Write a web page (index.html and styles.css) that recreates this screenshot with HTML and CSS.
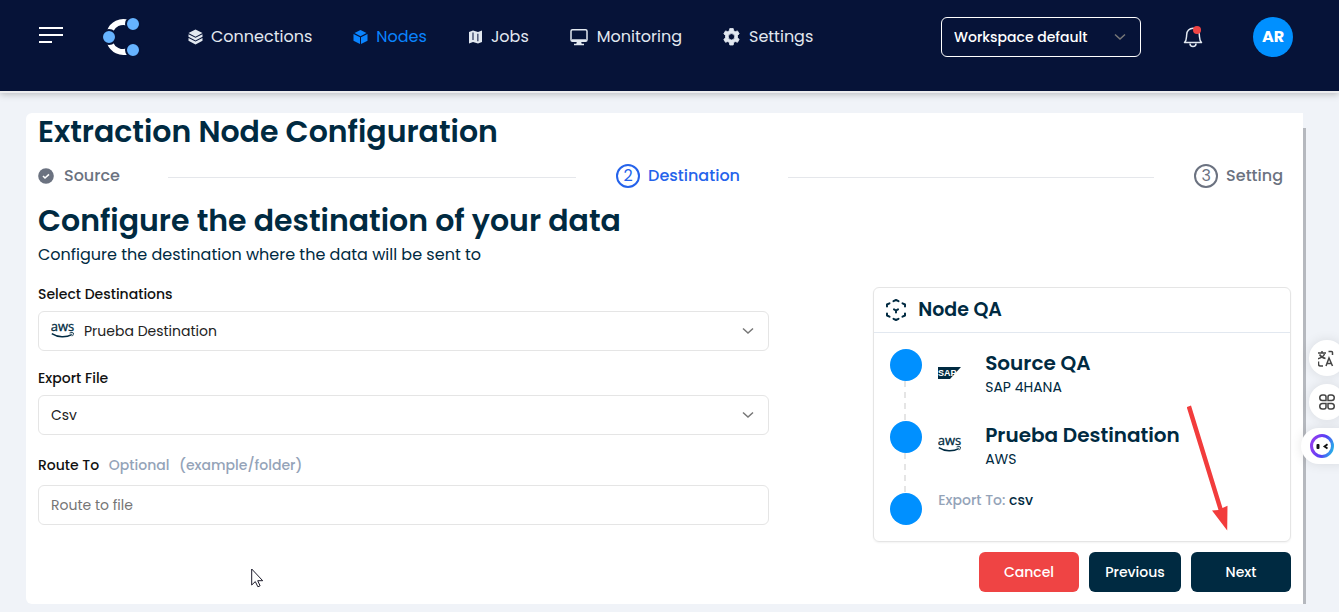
FILE: index.html
```html
<!DOCTYPE html>
<html lang="en">
<head>
<meta charset="utf-8">
<meta name="viewport" content="width=device-width, initial-scale=1">
<title>Extraction Node Configuration</title>
<link rel="stylesheet" href="styles.css">
</head>
<body>
<header class="topbar">
  <button class="menu" type="button" aria-label="Menu">
    <svg width="26" height="20" viewBox="0 0 26 20"><path d="M1 3h24M1 10h24M1 17h13" stroke="#fff" stroke-width="2"/></svg>
  </button>
  <a class="logo" href="#" aria-label="Home">
    <svg width="38" height="40" viewBox="0 0 38 40">
      <path d="M24.500 5.500A14.500 14.500 0 0 0 7 14" fill="none" stroke="#fff" stroke-width="6"/>
      <path d="M24.500 34.500A14.500 14.500 0 0 1 7 26" fill="none" stroke="#fff" stroke-width="6"/>
      <g fill="#66b3ff" stroke="#061338" stroke-width="2"><circle cx="30" cy="7" r="7"/><circle cx="6" cy="20" r="7"/><circle cx="30" cy="33" r="7"/></g>
    </svg>
  </a>
  <nav class="nav">
    <a href="#"><svg width="15" height="16" viewBox="0 0 15 16"><path d="M7.500.5l7 3.600-7 3.600-7-3.600z"/><path d="M.5 5.300v2.500l7 3.600 7-3.600V5.300l-7 3.500z"/><path d="M.5 9v2.800l7 3.700 7-3.700V9l-7 3.500z"/></svg>Connections</a>
    <a href="#" class="current"><svg width="15" height="14" viewBox="0 0 15 14"><path d="M7.500 0l6 3-6 3.200-6-3.200z"/><path d="M.5 4l6.500 3.200V14L.5 10.800zM14.500 4L8 7.200V14l6.500-3.200z"/></svg>Nodes</a>
    <a href="#"><svg width="15" height="14" viewBox="0 0 15 14"><path d="M1 2l4-1.500 5 1.500 4-1.500V12l-4 1.500L5 12l-4 1.500z"/><path d="M5 2.500v7.500M9.800 3.800v7.500" stroke="#565f7e" stroke-width="1.600"/></svg>Jobs</a>
    <a href="#"><svg width="18" height="18" viewBox="0 0 18 18"><rect x="1" y="1.700" width="16" height="11.600" rx="1.500" fill="none" stroke="currentColor" stroke-width="1.500"/><path d="M2 11.200h14v2H2zM7 13h4l.7 2.800H14v1.500H4v-1.500h2.300z"/></svg>Monitoring</a>
    <a href="#"><svg width="17" height="18" viewBox="0 0 17 18"><path fill-rule="evenodd" d="M6.800.5h3.400l.5 2.300 1.500.9 2.300-.8 1.700 2.900-1.700 1.600v2.400l1.700 1.600-1.700 2.900-2.300-.8-1.500.9-.5 2.600H6.800l-.5-2.600-1.500-.9-2.300.8-1.700-2.900 1.700-1.600V7.400L.8 5.800l1.700-2.900 2.300.8 1.500-.9zM8.500 5.600a3.200 3.200 0 1 0 0 6.400 3.200 3.200 0 0 0 0-6.400z" stroke="currentColor" stroke-width=".8" stroke-linejoin="round"/></svg>Settings</a>
  </nav>
  <select class="select workspace" aria-label="Workspace"><option>Workspace default</option></select>
  <button class="bell" type="button" aria-label="Notifications">
    <svg width="20" height="24" viewBox="0 0 20 24"><path d="M1.500 17.500C3.800 15.500 3.300 13 3.700 9.500a6.300 6.300 0 0 1 12.600 0c.4 3.500-.1 6 2.200 8z" fill="none" stroke="#e2e8f0" stroke-width="1.500" stroke-linejoin="round"/><path d="M7 18.500a3 3 0 0 0 6 0" fill="none" stroke="#e2e8f0" stroke-width="1.500"/><circle cx="14" cy="5" r="4" fill="#ef4444"/></svg>
  </button>
  <button class="avatar" type="button">AR</button>
</header>

<main class="page">
  <section class="panel">
    <h1>Extraction Node Configuration</h1>
    <ol class="steps">
      <li><svg width="16" height="16" viewBox="0 0 16 16"><circle cx="8" cy="8" r="7.800" fill="#6b7280"/><path d="M5 8l2 2 4-3.600" fill="none" stroke="#fff" stroke-width="1.600"/></svg><span>Source</span></li>
      <li class="active" aria-current="step"><b>2</b><span>Destination</span></li>
      <li><b>3</b><span>Setting</span></li>
    </ol>
    <h2>Configure the destination of your data</h2>
    <p class="lead">Configure the destination where the data will be sent to</p>
    <div class="columns">
      <form class="form">
        <div class="field">
          <label for="dest">Select Destinations</label>
          <div class="with-logo">
            <svg class="brand" width="24" height="24" viewBox="0 0 24 24"><text x="11.500" y="12.500" text-anchor="middle" class="aws-text">aws</text><path d="M.8 15.600c6 4 14.400 4 20 1" fill="none" stroke="currentColor" stroke-width="1.400"/><path d="M18.600 15c1.800-.5 3.400-.5 3.800 0 .2.800-.3 2.200-1.200 3.200" fill="none" stroke="currentColor"/></svg>
            <select class="select" id="dest"><option>Prueba Destination</option></select>
          </div>
        </div>
        <div class="field">
          <label for="file">Export File</label>
          <select class="select" id="file"><option>Csv</option></select>
        </div>
        <div class="field route">
          <label for="route">Route To <span>Optional</span> <span>(example/folder)</span></label>
          <input id="route" type="text" placeholder="Route to file">
        </div>
      </form>
      <aside class="side">
        <div class="card">
          <h3><svg width="22" height="24" viewBox="0 0 22 24" fill="none" stroke="#002a41" stroke-width="2" stroke-linecap="round" stroke-linejoin="round"><path d="M8.500 3.200L11 2l2.500 1.200M4.500 5.300L2 6.500V8.500M17.500 5.300L20 6.500V8.500M2 15.500v2l2.500 1.200M20 15.500v2l-2.500 1.200M8.500 20.800L11 22l2.500-1.200M9 11.300l2 1.200 2-1.200M11 12.500V14.500"/></svg>Node QA</h3>
          <ol class="timeline">
            <li>
              <svg class="brand" width="24" height="24" viewBox="0 0 24 24"><path d="M0 7h23L12 19H0z" fill="#002a41"/><text x="0" y="16" class="sap-text">SAP</text></svg>
              <div><strong>Source QA</strong><small>SAP 4HANA</small></div>
            </li>
            <li>
              <svg class="brand" width="24" height="24" viewBox="0 0 24 24"><text x="11.500" y="12.500" text-anchor="middle" class="aws-text">aws</text><path d="M.8 15.600c6 4 14.400 4 20 1" fill="none" stroke="currentColor" stroke-width="1.400"/><path d="M18.600 15c1.800-.5 3.400-.5 3.800 0 .2.800-.3 2.200-1.200 3.200" fill="none" stroke="currentColor"/></svg>
              <div><strong>Prueba Destination</strong><small>AWS</small></div>
            </li>
            <li><p><span>Export To:</span> csv</p></li>
          </ol>
          <svg class="arrow" width="42" height="127" viewBox="0 0 42 127" aria-hidden="true"><path d="M-.3 3l4.300-1.500 31.500 102.500 5-2.200-.3 24.700L25 106.500l6.500-.5z" fill="#f23c3c"/></svg>
        </div>
        <div class="actions">
          <button class="btn cancel" type="button">Cancel</button>
          <button class="btn previous" type="button">Previous</button>
          <button class="btn" type="button">Next</button>
        </div>
      </aside>
    </div>
    <svg class="cursor" width="13" height="20" viewBox="0 0 13 20" aria-hidden="true"><path d="M.7 1v16l3.600-3.400 2.600 5.200 2.200-1-2.400-5.100h5z" fill="#fff" stroke="#1c1b2b"/></svg>
  </section>
  <div class="rail"></div>
</main>

<div class="dock">
  <button type="button" aria-label="Translate"><svg width="18" height="17" viewBox="1 0 18 17" fill="none" stroke="#444" stroke-width="1.500"><path d="M1 3h8M5 1v2M2.500 4.500C4 7 6 8 8.500 8.500M7.500 4C6.500 6.500 4 8 1 8.700M11.500 1.500h3a1 1 0 0 1 1 1V5M1.500 11.500V14a2 2 0 0 0 2 2H6M9 16l3-8 3.500 8M10 13.500h4.500"/></svg></button>
  <button type="button" aria-label="Apps"><svg width="16" height="16" viewBox="0 0 16 16" fill="none" stroke="#444" stroke-width="1.500"><path d="M3.500 1H5a2 2 0 0 1 2 2v3.500H3.500a2.700 2.700 0 0 1 0-5.500zM12.500 1H11a2 2 0 0 0-2 2v3.500h3.500a2.700 2.700 0 0 0 0-5.500zM3.500 15H5a2 2 0 0 0 2-2V9.500H3.500a2.700 2.700 0 0 0 0 5.500zM12.500 15H11a2 2 0 0 1-2-2V9.500h3.500a2.700 2.700 0 0 1 0 5.500z"/></svg></button>
  <button class="bot" type="button" aria-label="Assistant"><svg width="26" height="26" viewBox="0 0 26 26"><defs><linearGradient id="ring" x1="0" y1=".6" x2="1" y2=".9"><stop offset="0" stop-color="#8b3df0"/><stop offset=".5" stop-color="#5540f5"/><stop offset="1" stop-color="#25b9e8"/></linearGradient></defs><circle cx="13" cy="13" r="10.500" fill="#fff" stroke="url(#ring)" stroke-width="3"/><rect x="7.500" y="11" width="3" height="5" rx="1" fill="#111"/><path d="M18.500 11.200l-3 2.200 3 2" fill="none" stroke="#111" stroke-width="1.800"/></svg></button>
</div>
</body>
</html>
```

FILE: styles.css
```css
* { box-sizing: border-box; }
body { margin: 0; min-height: 100vh; background: #f0f3f8; color: #002a41; font: 14px/20px Poppins, Inter, sans-serif; }
h1, h2, h3, p, ol { margin: 0; padding: 0; }
ol { list-style: none; }
button, input, select { font: inherit; }
button { border: 0; padding: 0; background: none; cursor: pointer; }
svg { display: block; flex: none; }
.aws-text { font: 400 13px "Open Sans", sans-serif; fill: currentColor; stroke: currentColor; stroke-width: .3px; }
.sap-text { font: 700 9px "Liberation Sans", sans-serif; fill: #fff; }

.topbar { display: flex; align-items: center; padding: 17px 46px 34px 38px; background: #061338; box-shadow: 0 2px 0 #ececee, 0 3px 7px rgba(0, 0, 0, .25); }
.menu { margin-bottom: 4px; }
.logo { margin-left: 39px; }
.nav { display: flex; gap: 41px; margin-left: 47px; margin-right: auto; }
.nav a { display: flex; align-items: center; gap: 8px; color: #e2e8f0; font-size: 16px; line-height: 24px; text-decoration: none; }
.nav a:nth-child(n+4) { gap: 9px; }
.nav svg { fill: currentColor; }
.nav .current { color: #0a84ff; }

.select, input { display: block; width: 100%; height: 40px; padding: 0 12px; border: 1px solid #e5e5e5; border-radius: 6px; background: #fff; color: #222; outline: 0; }
.select { appearance: none; background: #fff url("data:image/svg+xml,%3Csvg xmlns='http://www.w3.org/2000/svg' width='12' height='8' fill='none' stroke='%23777' stroke-width='1.500'%3E%3Cpath d='M1 1.500l5 4.500 5-4.500'/%3E%3C/svg%3E") no-repeat right 14px center; }
.workspace { width: 200px; border-color: #fff; background-color: transparent; color: #fff; font-weight: 500; }
.bell { margin-left: 42px; }
.avatar { width: 40px; height: 40px; margin-left: 50px; border-radius: 50%; background: #0090ff; color: #fff; font-size: 16px; font-weight: 700; }

.page { display: flex; padding: 22px 33px 8px 26px; }
.panel { position: relative; flex: 1; padding: 1px 12px 12px; border-radius: 6px 0 0 6px; background: #fff; }
.rail { width: 3px; margin-top: 15px; background: #b5b8be; }
h1, h2 { font-size: 30px; line-height: 36px; font-weight: 600; }
.steps { display: grid; grid-template-columns: 1fr 1fr auto; margin-top: 14px; color: #6b7280; font-size: 16px; line-height: 24px; font-weight: 500; }
.steps li { display: flex; align-items: center; }
.steps li:not(:last-child)::after { content: ""; flex: 1; height: 1px; margin: 2px 40px 0 48px; background: #e5e7eb; }
.steps li:last-child { padding-right: 8px; }
.steps span { margin-left: 8px; }
.steps svg + span { margin-left: 10px; }
.steps b { width: 24px; height: 24px; border: 2px solid currentColor; border-radius: 50%; font-weight: 400; line-height: 20px; text-align: center; }
.steps .active { color: #2563eb; }
h2 { margin-top: 15px; }
.lead { font-size: 16px; line-height: 24px; margin-top: 4px; }

.columns { display: grid; grid-template-columns: 7fr 4fr; column-gap: 104px; margin-top: 20px; }
.field label { display: block; margin-bottom: 7px; color: #111; font-weight: 500; }
.field { margin-top: 17px; }
.field:first-child { margin-top: -3px; }
.route { margin-top: 20px; }
.route label { margin-bottom: 10px; }
.route span { margin-left: 6px; color: #94a3b8; }
.with-logo { position: relative; }
.with-logo .brand { position: absolute; left: 13px; top: 7px; }
.with-logo .select { padding-left: 45px; }
input::placeholder { color: #757575; opacity: 1; }

.card { position: relative; border: 1px solid #e5e5e5; border-radius: 6px; box-shadow: 0 1px 2px rgba(0, 0, 0, .05); }
.card h3 { display: flex; align-items: center; gap: 11px; padding: 8px 11px; border-bottom: 1px solid #e2e8f0; font-size: 19px; line-height: 28px; font-weight: 600; }
.timeline { padding: 16px; }
.timeline li { position: relative; display: flex; gap: 23px; height: 72px; padding-left: 48px; }
.timeline li::before { content: ""; position: absolute; left: 0; top: 0; width: 32px; height: 32px; border-radius: 50%; background: #0090ff; }
.timeline li:not(:last-child)::after { content: ""; position: absolute; left: 14px; top: 32px; bottom: 0; width: 2px; background: repeating-linear-gradient(#e5e5e5 0 6px, transparent 6px 11px); }
.timeline li:last-child { height: 32px; }
.timeline .brand { margin-top: 11px; }
.timeline strong, .timeline small { display: block; }
.timeline strong { font-size: 20px; line-height: 28px; font-weight: 600; }
.timeline small { font-size: 14px; line-height: 20px; }
.timeline p { margin-top: -3px; font-weight: 500; }
.timeline p span { color: #94a3b8; }
.arrow { position: absolute; right: 61px; bottom: 10px; }
.actions { display: flex; justify-content: flex-end; gap: 10px; margin-top: 10px; }
.btn { min-width: 100px; height: 40px; border-radius: 6px; background: #002a41; color: #fff; font-weight: 500; }
.btn.previous { min-width: 92px; }
.btn.cancel { background: #ef4444; }
.cursor { position: absolute; left: 225px; bottom: 16px; }

.dock { position: fixed; right: -6px; top: 340px; display: flex; flex-direction: column; align-items: flex-end; gap: 8px; }
.dock button { display: grid; place-items: center; width: 36px; height: 36px; border-radius: 50%; background: #fff; box-shadow: 0 0 12px rgba(0, 0, 0, .1); }
.dock .bot { width: 44px; padding-right: 3px; border-radius: 18px 0 0 18px; }
```
